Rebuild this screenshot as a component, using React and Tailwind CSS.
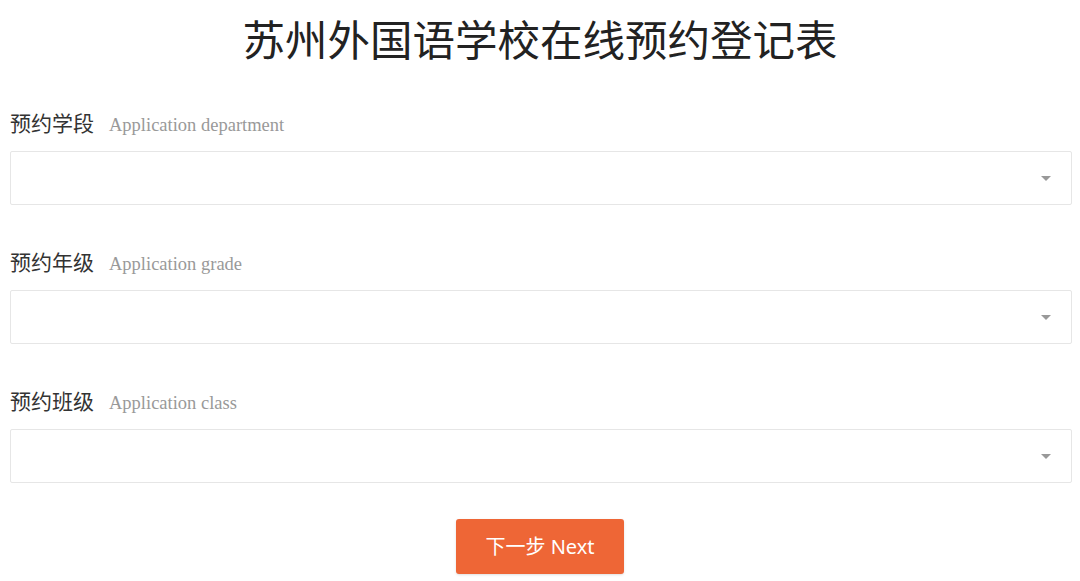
import React from "react";

const fields = [
  { cn: "预约学段", en: "Application department" },
  { cn: "预约年级", en: "Application grade" },
  { cn: "预约班级", en: "Application class" },
];

const SelectBox = () => (
  <div className="h-[54px] bg-white border border-[#e6e6e6] rounded-[2px] flex items-center justify-end pr-[20px]">
    <span className="w-0 h-0 border-l-[5px] border-r-[5px] border-t-[5px] border-l-transparent border-r-transparent border-t-[#999999]"></span>
  </div>
);

export default function App() {
  return (
    <div className="w-[1080px] h-[581px] bg-white overflow-hidden" style={{ fontFamily: '"Noto Sans", "Noto Sans CJK SC", sans-serif' }}>
      <h1 className="text-center text-[42.5px] leading-[44px] text-[#222222] pt-[18px]">
        苏州外国语学校在线预约登记表
      </h1>
      <div className="pl-[10px] pr-[8px] pt-[40px] flex flex-col gap-[36px]">
        {fields.map((f) => (
          <div key={f.cn}>
            <div className="flex items-baseline h-[40px] mb-[9px] pt-[6px]">
              <span className="text-[21px] text-[#333333]">{f.cn}</span>
              <span className="ml-[15px] text-[18.5px] text-[#999999]" style={{ fontFamily: '"Liberation Serif", serif' }}>
                {f.en}
              </span>
            </div>
            <SelectBox />
          </div>
        ))}
      </div>
      <div className="flex justify-center mt-[36px]">
        <button className="w-[168px] h-[55px] bg-[#ee6636] text-white text-[20px] rounded-[3px] shadow-sm">
          下一步 Next
        </button>
      </div>
    </div>
  );
}
